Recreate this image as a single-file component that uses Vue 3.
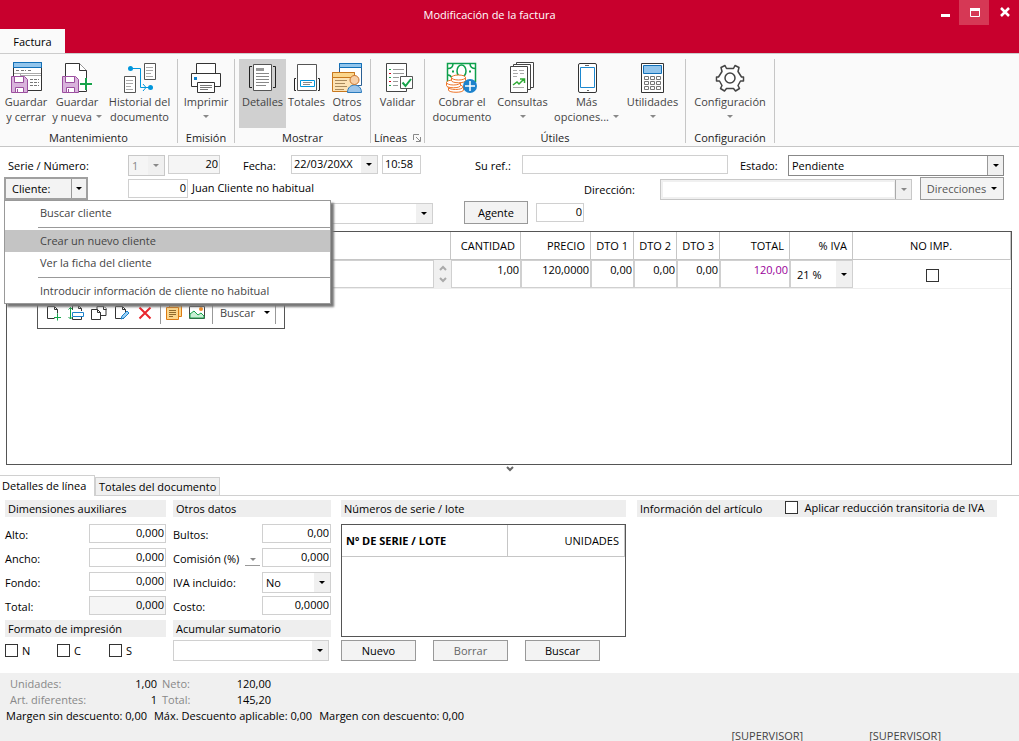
<script setup>
import { ref } from 'vue'

const floppy = `
  <path d="M1.500 14.500h13l3 3v13h-16z" fill="#d9b3dc" stroke="#9b4f9f"/>
  <path d="M4.500 14.500h9v6h-9z" fill="#fff" stroke="#9b4f9f"/>
  <path d="M5.500 25.500h8v5h-8z" fill="#fff" stroke="#9b4f9f"/><path d="M7.500 27v3" stroke="#9b4f9f"/>`

const icons = {
  saveClose: `
    <path d="M3.500 .5h28v28h-28z" fill="#fff" stroke="#333"/>
    <path d="M3.500 .5h28v5h-28z" fill="#92c5ec" stroke="#1270b8"/>
    <path d="M6 8.500h3m2 0h5m2 0h3M20 17.500h9M20 20.500h9M20 23.500h9" stroke="#777" stroke-dasharray="3 1"/>
    <path d="M4 11.500h27M10.500 12v2M10 13.500h21" stroke="#aaa"/>${floppy}`,
  saveNew: `
    <path d="M4.500 1.500h14l7 7v21h-21z" fill="#fff" stroke="#333"/>
    <path d="M18.500 1.500v7h7" fill="#fff" stroke="#333"/>${floppy}
    <path d="M25.500 16.500v11M20 22h11" stroke="#fff" stroke-width="4"/>
    <path d="M25 16v12M19 22h12" stroke="#16a34a" stroke-width="2"/>`,
  history: `
    <path d="M20.500 1.500h11v16h-11zM.5 14.500h11v16h-11z" fill="#fff" stroke="#555"/>
    <path d="M22 5.500h7m-7 3h7m-7 3h5m-5 3h7M2 18.500h7m-7 3h7m-7 3h5m-5 3h7" stroke="#aaa"/>
    <path d="M6 6.500h10.500v19H26M19 22l3 3.500-3 3.500" fill="none" stroke="#0096dc"/>
    <circle cx="6.500" cy="6.500" r="2.500" fill="#0096dc"/><circle cx="26.500" cy="25.500" r="2.500" fill="#0096dc"/>`,
  print: `
    <path d="M6.500 11.500v-10h19v10" fill="#fff" stroke="#333"/>
    <path d="M1.500 11.500h29v13h-29z" fill="#fff" stroke="#333"/>
    <path d="M4 15h3v3H4z" fill="#0f82cf"/>
    <path d="M7.500 20.500h17v10h-17z" fill="#fff" stroke="#333"/>
    <path d="M10 23.500h12m-12 2h12m-12 2h8" stroke="#777"/>`,
  details: `
    <path d="M6.500 2.500h18v26h-18z" fill="#fff" stroke="#555"/>
    <path d="M9 6h8v3H9z" fill="#999"/><path d="M9 11.500h13m-13 3h13m-13 3h13m-13 3h13m-13 3h10" stroke="#888"/>
    <path d="M5 4.500H2.500v21H5M26 4.500h2.500v21H26" fill="none" stroke="#222"/>`,
  totals: `
    <path d="M6.500 2.500h19v26h-19z" fill="#fff" stroke="#555"/>
    <path d="M9.500 18.500h14v6h-14z" fill="#fff" stroke="#0096dc"/><path d="M12 20.500h9m-9 2h7" stroke="#888"/>
    <path d="M5 16.500H3.500v12H5M27 16.500h1.500v12H27" fill="none" stroke="#222"/>`,
  other: `
    <path d="M8.500 1.500h22v22h-22z" fill="#fff" stroke="#2a5f93"/><path d="M8.500 1.500h22v4h-22z" fill="#92c5ec" stroke="#1270b8"/>
    <path d="M1.500 10.500h22v19h-22z" fill="#fde3b5" stroke="#c8781e"/><path d="M1.500 10.500h22v5h-22z" fill="#fbd68c" stroke="#c8781e"/>
    <path d="M4 18.500h12m-12 3h10m-10 3h12m-12 3h9" stroke="#a88a5c"/>
    <path d="M16.500 30.500c0-10 14-10 14 0z" fill="#9cc5ea" stroke="#2b7bbd"/>
    <circle cx="23.500" cy="18" r="4.500" fill="#f7cfa6" stroke="#c8722a"/>`,
  validate: `
    <path d="M4.500 1.500h20v28h-20z" fill="#fff" stroke="#444"/>
    <path d="M11 7.500h11m-11 4h11m-11 4h6m-6 4h5m-5 4h5" stroke="#999"/>
    <path d="M7 7.500h2m-2 8h2m-2 8h2" stroke="#16a34a"/><path d="M7 11.500h2m-2 8h2" stroke="#d0021b"/>
    <path d="M18.500 14.500h12v12h-12z" fill="#fff" stroke="#555"/>
    <path d="M20.500 20.500l3 3.500 5.500-7" fill="none" stroke="#16a34a" stroke-width="2"/>`,
  charge: `
    <path d="M1.500 1.500h28v18h-28z" fill="#fff" stroke="#0ea04b" stroke-width="1.500"/>
    <path d="M2 6.500c3 0 5-2 5-5M24 1.500c0 3 2 5 5.500 5M2 13c2 0 3 1 4 3" fill="none" stroke="#0ea04b" stroke-width="1.500"/>
    <ellipse cx="15.500" cy="9" rx="4.500" ry="6" fill="#fff" stroke="#0ea04b" stroke-width="1.500"/>
    <path d="M6 9.500h2m15 0h2" stroke="#0ea04b" stroke-width="2"/>
    <g fill="#fff" stroke="#ee7428"><path d="M2.500 26v2c0 3 15 3 15 0v-3z"/><ellipse cx="9.500" cy="25" rx="7.500" ry="2.500"/>
    <path d="M.5 20.500v3c0 3 14 3 14 0v-3z"/><ellipse cx="7.500" cy="20.500" rx="7" ry="2.500"/>
    <path d="M5.500 15.500v3c0 3 14 3 14 0v-3z"/><ellipse cx="12.500" cy="15.500" rx="7" ry="2.500"/></g>
    <circle cx="24" cy="24" r="7" fill="#1c82cc"/><path d="M24 19v10M19 24h10" stroke="#fff" stroke-width="1.500"/>`,
  queries: `
    <path d="M9.500 .5h17v25h-17z" fill="#fff" stroke="#444"/><path d="M6.500 2.500h17v25h-17z" fill="#fff" stroke="#444"/>
    <path d="M3.500 4.500h17v26h-17z" fill="#fff" stroke="#444"/>
    <path d="M6 8.500h4m2 0h5m-11 3h5m2 0h4m-11 3h4m-4 11h11" stroke="#aaa"/>
    <path d="M6 23l4-3 2 2 5-5M13 17h4.500v4" fill="none" stroke="#2faa35" stroke-width="1.500"/>`,
  phone: `
    <rect x="7.500" y="1.500" width="18" height="29" rx="1.500" fill="#fff" stroke="#333"/>
    <path d="M9.500 5.500h14v20h-14z" fill="#fff" stroke="#1c88d0"/><path d="M14 3.500h4m-2 25h2" stroke="#666"/>`,
  calculator: `
    <path d="M4.500 1.500h22v29h-22z" fill="#fff" stroke="#333"/>
    <path d="M6.500 3.500h18v8h-18z" fill="#92c5ec" stroke="#1270b8"/>
    <path d="M7.500 14.500h4v3h-4zm6 0h4v3h-4zm6 0h4v3h-4zm-12 5h4v3h-4zm6 0h4v3h-4zm6 0h4v3h-4zm-12 5h4v3h-4zm6 0h4v3h-4zm6 0h4v3h-4z" fill="#fff" stroke="#777"/>`,
  gear: `
    <path d="M12.500 6.500L11 3.500 7 5.500l1 4-3.500 5.500H2.500v4h3L8 23.500l-1.500 3 4 2.500 2-2.500h7l2 2.500 4-2.500-1.500-3 2.500-4.500h3v-4h-2L24 9.500l1-4-4-2-1.500 3z" fill="#fff" stroke="#444" stroke-width="1.500" stroke-linejoin="round"/>
    <circle cx="16" cy="16" r="5" fill="#fff" stroke="#444" stroke-width="1.500"/>`
}

const groups = [
  { name: 'Mantenimiento', items: [
    { lines: ['Guardar', 'y cerrar'], icon: 'saveClose', w: 52 },
    { lines: ['Guardar', 'y nueva'], icon: 'saveNew', w: 50, caret: true },
    { lines: ['Historial del', 'documento'], icon: 'history', w: 75 }] },
  { name: 'Emisión', items: [{ lines: ['Imprimir', ''], icon: 'print', w: 56, caret: true }] },
  { name: 'Mostrar', cls: 'g-pad', items: [
    { lines: ['Detalles'], icon: 'details', w: 47, active: true },
    { lines: ['Totales'], icon: 'totals', w: 41 },
    { lines: ['Otros', 'datos'], icon: 'other', w: 40 }] },
  { name: 'Líneas', launcher: true, items: [{ lines: ['Validar'], icon: 'validate', w: 53 }] },
  { name: 'Útiles', cls: 'g-pad', items: [
    { lines: ['Cobrar el', 'documento'], icon: 'charge', w: 66 },
    { lines: ['Consultas', ''], icon: 'queries', w: 55, caret: true },
    { lines: ['Más', 'opciones...'], icon: 'phone', w: 73, caret: true },
    { lines: ['Utilidades', ''], icon: 'calculator', w: 59, caret: true }] },
  { name: 'Configuración', items: [{ lines: ['Configuración', ''], icon: 'gear', w: 88, caret: true }] }
]

const menu = [
  { text: 'Buscar cliente', rule: true },
  { text: 'Crear un nuevo cliente', active: true },
  { text: 'Ver la ficha del cliente', rule: true },
  { text: 'Introducir información de cliente no habitual' }
]

const gridTools = [
  { label: 'Nueva línea', icon: '<path d="M9.500 13.500h-7v-12h7l3 3v4M9.500 1.500v3h3" fill="#fff" stroke="#333"/><path d="M12.500 8.500v7M9 12.500h7" stroke="#16a34a"/>' },
  { label: 'Insertar línea', icon: '<path d="M4.500 5V.5h6l3 3V6M4.500 12v2.500h9V12M10.500 .5v3h3" fill="none" stroke="#333"/><path d="M4.500 7.500h11v4h-11z" fill="#fff" stroke="#1c82cc"/><path d="M2.500 2v12M.5 4.500l2-2 2 2M.5 12l2 2 2-2" fill="none" stroke="#16a34a"/>' },
  { label: 'Duplicar línea', icon: '<path d="M6 4.500v-3h7l2 2v7h-5" fill="#fff" stroke="#333"/><path d="M.5 4.500h6l3 3v7h-9zM6.500 4.500v3h3M12.500 1.500v3h3" fill="#fff" stroke="#333"/>' },
  { label: 'Modificar línea', icon: '<path d="M10 13.500H1.500v-12h7l3 3v3M8.500 1.500v3h3" fill="#fff" stroke="#333"/><path d="M7 14l1-3 5-5 2 2-5 5z" fill="#9cd0f5" stroke="#1c82cc"/>' },
  { label: 'Borrar línea', icon: '<path d="M2.500 2.500l11 11M13.500 2.500l-11 11" stroke="#e8262d" stroke-width="2"/>' },
  { label: 'Notas', sep: true, icon: '<path d="M3.500 .5h12v11h-12z" fill="#fbd68c" stroke="#dd7b12"/><path d="M.5 2.500h12v12H.5z" fill="#fbd68c" stroke="#dd7b12"/><path d="M3 5.500h7m-7 2h7m-7 2h7m-7 2h4" stroke="#8f6b2e"/>' },
  { label: 'Imagen', icon: '<path d="M.5 1.500h15v12H.5z" fill="#fff" stroke="#444"/><path d="M1 9l4-3 4 4 3-2 3 3v2H1z" fill="#c9efd5" stroke="#16a34a"/><circle cx="12" cy="4" r="2" fill="#f28c28"/>' }
]

const cells = ref(['1,00', '120,0000', '0,00', '0,00', '0,00', '120,00'])
const dims = [['Alto:', '0,000'], ['Ancho:', '0,000'], ['Fondo:', '0,000'], ['Total:', '0,000', true]]
</script>

<template>
  <div class="window">
    <header class="title">
      <div class="title-row">
        <h1>Modificación de la factura</h1>
        <div class="controls">
          <button aria-label="Minimizar"><svg width="12" height="12"><path d="M3 7h9v3H3z" fill="#fff" /></svg></button>
          <button class="hot" aria-label="Maximizar"><svg width="12" height="12"><path d="M2 1h10v3H2z" fill="#fff" /><path d="M2.500 1.500h9v8h-9z" fill="none" stroke="#fff" /></svg></button>
          <button aria-label="Cerrar"><svg width="12" height="12"><path d="M3 1l8 8M11 1l-8 8" stroke="#fff" stroke-width="2.500" /></svg></button>
        </div>
      </div>
      <button class="file-tab">Factura</button>
    </header>

    <nav class="ribbon">
      <section v-for="g in groups" :key="g.name" class="group">
        <div class="tools" :class="g.cls">
          <button v-for="i in g.items" :key="i.icon" class="tool" :class="{ active: i.active }" :style="{ width: i.w + 'px' }">
            <svg width="32" height="32" viewBox="0 0 32 32" v-html="icons[i.icon]"></svg>
            <span>{{ i.lines[0] }}</span>
            <span class="second">{{ i.lines[1] }}<i v-if="i.caret" class="caret gray"></i></span>
          </button>
        </div>
        <div class="group-name">
          <span>{{ g.name }}</span>
          <svg v-if="g.launcher" width="8" height="8"><path d="M.5 6V.5H6M3 3l4 4M7.500 3v4.500H3" fill="none" stroke="#888" /></svg>
        </div>
      </section>
    </nav>

    <main>
      <div class="form">
        <div class="row">
          <label class="first" for="num">Serie / Número:</label>
          <div class="combo serie off"><select aria-label="Serie" disabled><option>1</option></select><span class="arrow"><i class="caret gray"></i></span></div>
          <input id="num" class="num n-doc ro" value="20" readonly>
          <label class="l-date" for="date">Fecha:</label>
          <div class="combo date"><input id="date" value="22/03/20XX"><span class="arrow"><i class="caret"></i></span></div>
          <input class="time" aria-label="Hora" value="10:58">
          <label class="l-ref" for="refn">Su ref.:</label>
          <input id="refn" class="refn">
          <label class="l-state" for="state">Estado:</label>
          <div class="combo state"><select id="state"><option>Pendiente</option></select><span class="arrow"><i class="caret"></i></span></div>
        </div>
        <div class="row second-row">
          <div class="client">
            <button class="split"><span>Cliente:</span><b><i class="caret"></i></b></button>
            <div class="menu" role="menu">
              <template v-for="m in menu" :key="m.text">
                <button role="menuitem" :class="{ active: m.active }">{{ m.text }}</button>
                <hr v-if="m.rule">
              </template>
            </div>
          </div>
          <input class="num n-client" aria-label="Código de cliente" value="0">
          <span class="client-name">Juan Cliente no habitual</span>
          <label class="l-dir" for="dir">Dirección:</label>
          <div class="combo dir off"><select id="dir" disabled><option></option></select><span class="arrow"><i class="caret gray"></i></span></div>
          <button class="btn dirs">Direcciones <i class="caret"></i></button>
        </div>
        <div class="row third-row">
          <div class="combo wide"><select aria-label="Dato de cliente"><option></option></select><span class="arrow"><i class="caret"></i></span></div>
          <button class="btn agent">Agente</button>
          <input class="num n-agent" aria-label="Agente" value="0">
        </div>
      </div>

      <div class="lines">
        <table>
          <colgroup><col><col class="c70"><col class="c70"><col class="c43"><col class="c43"><col class="c43"><col class="c70"><col class="c63"><col class="c158"></colgroup>
          <thead><tr><th></th><th>CANTIDAD</th><th>PRECIO</th><th>DTO 1</th><th>DTO 2</th><th>DTO 3</th><th>TOTAL</th><th>% IVA</th><th class="mid">NO IMP.</th></tr></thead>
          <tbody><tr>
            <td><div class="desc"><textarea aria-label="Descripción"></textarea>
              <div class="spin">
                <button aria-label="Subir"><svg width="8" height="6"><path d="M1 5l3-3 3 3" fill="none" stroke="#aaa" stroke-width="2" /></svg></button>
                <button aria-label="Bajar"><svg width="8" height="6"><path d="M1 1l3 3 3-3" fill="none" stroke="#aaa" stroke-width="2" /></svg></button>
              </div></div></td>
            <td v-for="(c, k) in cells" :key="k"><textarea class="num" :class="{ total: k === 5 }" aria-label="Valor" v-model="cells[k]"></textarea></td>
            <td><div class="combo vat"><select aria-label="% IVA"><option>21 %</option></select><span class="arrow"><i class="caret"></i></span></div></td>
            <td class="mid"><input type="checkbox" aria-label="No imprimir"></td>
          </tr></tbody>
        </table>
        <div class="bar">
          <button v-for="t in gridTools" :key="t.label" :aria-label="t.label" :class="{ sep: t.sep }"><svg width="16" height="16" v-html="t.icon"></svg></button>
          <button class="sep find">Buscar <i class="caret"></i></button>
        </div>
      </div>
      <button class="collapse" aria-label="Contraer"><svg width="8" height="6"><path d="M1 1l3 3 3-3" fill="none" stroke="#666" stroke-width="2" /></svg></button>

      <div class="tabs"><button class="on">Detalles de línea</button><button>Totales del documento</button></div>

      <div class="panels">
        <section>
          <h2>Dimensiones auxiliares</h2>
          <div class="fields">
            <label v-for="d in dims" :key="d[0]" class="field"><span>{{ d[0] }}</span><input class="num w77" :class="{ ro: d[2] }" :value="d[1]"></label>
          </div>
          <h2>Formato de impresión</h2>
          <div class="checks"><label v-for="c in ['N', 'C', 'S']" :key="c"><input type="checkbox">{{ c }}</label></div>
        </section>
        <section>
          <h2>Otros datos</h2>
          <div class="fields">
            <label class="field"><span>Bultos:</span><input class="num w69" value="0,00"></label>
            <div class="field"><label for="com">Comisión (%)</label><button class="mini" aria-label="Tipo de comisión"><i class="caret gray"></i></button><input id="com" class="num w69" value="0,000"></div>
            <label class="field"><span>IVA incluido:</span><span class="combo w69"><select><option>No</option></select><span class="arrow"><i class="caret"></i></span></span></label>
            <label class="field"><span>Costo:</span><input class="num w69" value="0,0000"></label>
          </div>
          <h2>Acumular sumatorio</h2>
          <div class="combo sum"><select aria-label="Acumular sumatorio"><option></option></select><span class="arrow"><i class="caret"></i></span></div>
        </section>
        <section>
          <h2>Números de serie / lote</h2>
          <div class="lots"><table><thead><tr><th class="left">Nº DE SERIE / LOTE</th><th>UNIDADES</th></tr></thead></table></div>
          <div class="buttons"><button class="btn">Nuevo</button><button class="btn dim">Borrar</button><button class="btn">Buscar</button></div>
        </section>
        <section class="info">
          <h2>Información del artículo <label><input type="checkbox">Aplicar reducción transitoria de IVA</label></h2>
        </section>
      </div>
    </main>

    <footer>
      <dl>
        <dt>Unidades:</dt><dd>1,00</dd><dt>Neto:</dt><dd>120,00</dd>
        <dt>Art. diferentes:</dt><dd>1</dd><dt>Total:</dt><dd>145,20</dd>
      </dl>
      <p class="margins"><span>Margen sin descuento: 0,00</span><span>Máx. Descuento aplicable: 0,00</span><span>Margen con descuento: 0,00</span></p>
      <p class="users"><span>[SUPERVISOR]</span><span>[SUPERVISOR]</span></p>
    </footer>
  </div>
</template>

<style>
body { margin: 0; }
</style>

<style scoped>
* { box-sizing: border-box; }
.window { display: flex; flex-direction: column; min-height: 100vh; background: #fff; color: #000; font: 11px/15px "Open Sans", "Noto Sans", sans-serif; }
button, input, select, textarea { font: inherit; color: inherit; margin: 0; padding: 0; border: 0; border-radius: 0; background: none; outline: 0; appearance: none; }
h1, h2, p, dl, dd { margin: 0; font: inherit; }
svg { display: block; flex: none; }
.caret { display: inline-block; flex: none; border: 3px solid transparent; border-top-color: #000; border-bottom: 0; }
.caret.gray { border-top-color: #888; }

.title { background: #c8002d; color: #fff; flex: none; }
.title-row { display: flex; height: 29px; padding-left: 50px; }
.title h1 { flex: 1; text-align: center; line-height: 30px; }
.controls { display: flex; height: 25px; }
.controls button { width: 30px; display: flex; justify-content: center; align-items: center; }
.controls .hot { background: #d63855; }
.file-tab { display: block; width: 65px; height: 24px; background: #fafafa; color: #000; }

.ribbon { display: flex; flex: none; height: 94px; padding-top: 5px; background: #fafafa; border-top: 1px solid #ccc; border-bottom: 1px solid #c6c6c6; }
.group { height: 84px; border-right: 1px solid #c6c6c6; }
.tools { display: flex; height: 69px; }
.g-pad { padding: 0 3px 0 4px; }
.tool { display: flex; flex-direction: column; align-items: center; padding-top: 3px; color: #444; white-space: nowrap; }
.tool.active { background: #d0d0d0; }
.second { display: flex; align-items: center; gap: 4px; height: 15px; }
.group-name { display: flex; justify-content: center; align-items: center; gap: 6px; padding-top: 2px; color: #222; }

main { flex: 1; display: flex; flex-direction: column; }
.form { padding: 8px 15px 7px 8px; }
.row { display: flex; align-items: flex-start; height: 22px; line-height: 22px; }
.second-row { height: 24px; }
.third-row { height: 23px; }
.second-row > input, .second-row > .combo, .third-row > input, .third-row > .combo { margin-top: 2px; }
input:not([type=checkbox]), .combo { height: 19px; border: 1px solid #d0d0d0; background: #fff; min-width: 0; padding: 0 2px 2px; line-height: 15px; }
.num { text-align: right; }
input.num { padding-right: 1px; }
input.ro { background: #f5f5f5; }
.combo { display: grid; grid-template-columns: 1fr 16px; height: 21px; padding: 0; }
.combo > select, .combo > input:not([type=checkbox]) { grid-area: 1 / 1 / 2 / 3; width: 100%; height: 100%; border: 0; background: none; padding: 0 18px 0 3px; }
.combo > .arrow { grid-area: 1 / 2; display: flex; align-items: center; justify-content: center; background: #f0f0f0; pointer-events: none; }
.combo select:disabled { opacity: 1; color: #888; }
.combo.off { border-color: #c8c8c8; background: #f5f5f5; }
.first { width: 120px; }
.serie { width: 37px; }
.n-doc { width: 52px; margin-left: 3px; }
.l-date { width: 48px; margin-left: 23px; }
.date.combo { width: 87px; height: 19px; }
.date.combo > input:not([type=checkbox]) { padding: 0 0 2px 2px; }
.time { width: 39px; margin-left: 4px; }
.l-ref { width: 47px; margin-left: 54px; }
.refn { flex: 1 1 206px; }
.l-state { width: 48px; margin-left: 12px; }
.state { flex: 1 1 216px; }
.state.combo { border-color: #888; }
.state .arrow { border-left: 1px solid #999; }
.client { position: relative; width: 124px; margin-left: -4px; z-index: 2; }
.split { display: flex; width: 84px; height: 23px; border: 2px solid #a0a0a0; background: #f3f3f3; }
.split span { flex: 1; text-align: left; padding-left: 6px; line-height: 19px; }
.split b { width: 15px; height: 19px; border-left: 1px solid #999; display: flex; align-items: center; justify-content: center; }
.menu { position: absolute; left: 0; top: 23px; width: 327px; padding: 1px 0; background: #fff; border: 1px solid #999; box-shadow: 3px 3px 2px #777; line-height: 22px; }
.menu button { display: block; width: 100%; height: 22px; padding-left: 35px; text-align: left; color: #444; }
.menu button.active { background: #c4c4c4; }
.menu hr { border: 0; border-top: 1px solid #999; margin: 3px 0 2px 33px; }
.n-client { width: 60px; }
.client-name { flex: 1; padding-left: 4px; }
.l-dir { width: 76px; line-height: 25px; }
.dir { flex: 0 1 252px; }
.dir .arrow { border-left: 1px solid #aaa; }
.dir.off select { background: #fff; border: 2px solid #f0f0f0; width: calc(100% - 15px); }
.btn { height: 21px; border: 1px solid #999; background: #f3f3f3; line-height: 19px; }
.row .btn { height: 23px; }
.dirs { width: 84px; margin-left: 8px; color: #555; display: flex; align-items: center; justify-content: center; gap: 5px; }
.wide { width: 305px; margin-left: 120px; }
.agent { width: 64px; margin: 0 8px 0 31px; }
.n-agent { width: 48px; }

.lines { flex: 1; margin: 0 7px 0 6px; border: 1px solid #555; }
table { width: 100%; border-collapse: separate; border-spacing: 0; table-layout: fixed; }
th { height: 28px; padding: 0 5px 0 4px; border: solid #c6c6c6; border-width: 0 1px 1px 0; font-weight: 400; text-align: right; }
td { height: 29px; padding: 0; border-bottom: 1px solid #eee; }
.c70 { width: 70px; } .c43 { width: 43px; } .c63 { width: 63px; } .c158 { width: 158px; }
.mid { text-align: center; }
td textarea { display: block; width: 100%; height: 28px; resize: none; overflow: hidden; border: 1px solid #d0d0d0; padding: 1px 1px 0; background: #fff; }
td .total { color: #909; }
.desc { display: flex; }
.desc textarea { flex: 1; }
.spin { width: 17px; display: flex; flex-direction: column; align-items: center; justify-content: space-evenly; background: #f0f0f0; }
.vat.combo { height: 28px; width: 100%; }
.vat.combo > select { padding-left: 6px; }
[type=checkbox] { width: 13px; height: 13px; border: 1px solid #333; background: #fff; flex: none; vertical-align: middle; }
.bar { display: flex; align-items: center; gap: 7px; width: 248px; height: 30px; margin: 10px 0 0 30px; padding: 0 7px 3px; border: 1px solid #555; }
.bar .sep { border-left: 1px solid #999; padding-left: 5px; height: 22px; display: flex; align-items: center; }
.bar .find { gap: 9px; border-right: 1px solid #999; padding: 0 5px 0 7px; color: #444; }
.collapse { align-self: center; height: 10px; padding-bottom: 3px; }

.tabs { display: flex; align-items: flex-end; height: 21px; border-bottom: 1px solid #d0d0d0; }
.tabs button { height: 18px; padding: 0 3px; border: 1px solid #d0d0d0; border-bottom: 0; background: #f0f0f0; }
.tabs .on { height: 21px; width: 95px; margin-bottom: -1px; padding: 0 2px 2px; background: #fff; border-left: 0; text-align: left; }
.panels { display: grid; grid-template-columns: 161px 157px 287px 1fr; padding: 4px 22px 12px 5px; column-gap: 8px; }
.panels > :nth-child(2) { margin-left: -1px; }
.panels > :nth-child(3) { padding-left: 2px; }
h2 { height: 17px; line-height: 17px; padding-left: 3px; background: #eee; white-space: nowrap; }
.fields { padding-top: 7px; }
.field { display: flex; justify-content: space-between; height: 24px; }
.field > :first-child { line-height: 22px; }
.w77 { width: 77px; } .w69 { width: 69px; }
.mini { width: 15px; height: 18px; border-bottom: 1px solid #999; margin-left: auto; margin-right: 2px; }
.checks { display: flex; padding-top: 7px; }
.checks label { width: 52px; display: flex; align-items: center; gap: 4px; height: 13px; }
.sum.combo { margin: 3px 2px 0 0; }
.lots { height: 113px; margin-top: 7px; border: 1px solid #555; }
.lots th { height: 32px; }
.lots .left { text-align: left; font-weight: 700; width: 166px; }
.buttons { display: flex; gap: 17px; margin-top: 3px; }
.buttons .btn { width: 75px; }
.dim { color: #666; }
.info { padding-left: 3px; }
.info h2 { display: flex; gap: 23px; }
.info label { display: flex; align-items: center; gap: 6px; height: 15px; }

footer { flex: none; padding-top: 3px; background: #f0f0f0; }
dl { display: grid; grid-template-columns: 87px 60px 44px 70px; line-height: 16px; padding-left: 10px; }
dt { color: #888; }
dt:nth-of-type(even) { padding-left: 5px; }
dd { text-align: right; }
.margins { display: flex; gap: 7px; padding-left: 6px; line-height: 16px; }
.users { display: flex; justify-content: flex-end; gap: 66px; padding: 7px 78px 0 0; line-height: 10px; color: #444; }
</style>
